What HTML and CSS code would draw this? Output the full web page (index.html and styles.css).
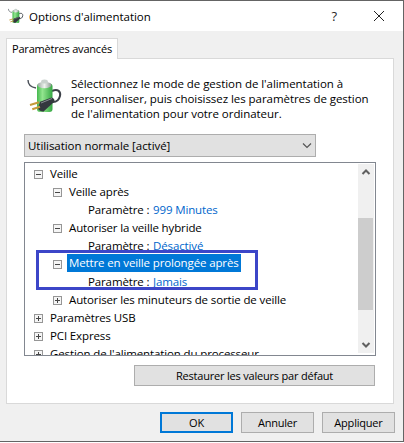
FILE: index.html
```html
<!doctype html>
<html lang="fr">
<head>
<meta charset="utf-8">
<title>Options d'alimentation</title>
<link rel="stylesheet" href="styles.css">
</head>
<body>
<svg class="defs" width="0" height="0">
	<defs>
		<linearGradient id="cell" x1="0" y1="0" x2="1" y2="0">
			<stop offset="0" stop-color="#45b84e"/>
			<stop offset="0.35" stop-color="#93e58f"/>
			<stop offset="1" stop-color="#35a743"/>
		</linearGradient>
		<linearGradient id="cap" x1="0" y1="0" x2="1" y2="0">
			<stop offset="0" stop-color="#9aa6a0"/>
			<stop offset="0.5" stop-color="#eef3ee"/>
			<stop offset="1" stop-color="#8b9690"/>
		</linearGradient>
		<symbol id="powerIcon" viewBox="0 0 36 36">
			<path d="M1 2 C1 6 3 9 9 10" fill="none" stroke="#4a5058" stroke-width="1.4"/>
			<path d="M25 13 C31 10 34 14 33 18 C32 22 30 24 26 24" fill="none" stroke="#3c4148" stroke-width="2"/>
			<rect x="10" y="5.5" width="15.5" height="28.5" rx="3" fill="url(#cell)"/>
			<ellipse cx="17.5" cy="7" rx="7" ry="3.2" fill="url(#cap)"/>
			<ellipse cx="17.5" cy="3.6" rx="3.4" ry="2" fill="#c9d2cd"/>
			<path d="M11 30 L13 23.7 L24.7 19.5 C27 20 28 22 27.3 23.7 L16.3 33.7 C13 33.5 11.5 32 11 30 Z" fill="#33383e"/>
			<path d="M14 25 L25 20.5" stroke="#878d92" stroke-width="1" fill="none"/>
			<path d="M3 27 L12 24.3 M5.3 31.3 L13 28.7" stroke="#c69a3a" stroke-width="2" fill="none"/>
		</symbol>
	</defs>
</svg>

<div id="window">
	<div class="titleBar">
		<svg class="titleIcon"><use href="#powerIcon"/></svg>
		<div class="titleText">Options d'alimentation</div>
		<div class="helpButton">?</div>
		<svg class="closeButton" width="12" height="12" viewBox="0 0 12 12">
			<path d="M1 1 L11 11 M11 1 L1 11" stroke="#222" stroke-width="1" fill="none"/>
		</svg>
	</div>

	<div class="dialogBody">
		<div class="tabStrip"><div class="tab">Paramètres avancés</div></div>
		<div class="tabPanel">
			<div class="intro">
				<svg class="introIcon"><use href="#powerIcon"/></svg>
				<div class="introText">Sélectionnez le mode de gestion de l'alimentation à personnaliser, puis choisissez les paramètres de gestion de l'alimentation pour votre ordinateur.</div>
			</div>

			<div class="combo">
				<span>Utilisation normale [activé]</span>
				<svg width="12" height="7" viewBox="0 0 12 7">
					<path d="M2 1.5 L6 5.5 L10 1.5" stroke="#555" stroke-width="1.2" fill="none"/>
				</svg>
			</div>

			<div class="tree">
				<div class="treeRows">
					<div class="row levelOne"><i class="expander minus"></i><span>Veille</span></div>
					<div class="row levelTwo"><i class="expander minus"></i><span>Veille après</span></div>
					<div class="row levelThree"><span class="paramLabel">Paramètre :</span><span class="paramValue">999 Minutes</span></div>
					<div class="row levelTwo"><i class="expander minus"></i><span>Autoriser la veille hybride</span></div>
					<div class="row levelThree"><span class="paramLabel">Paramètre :</span><span class="paramValue">Désactivé</span></div>
					<div class="row levelTwo"><i class="expander minus"></i><span class="selected">Mettre en veille prolongée après</span></div>
					<div class="row levelThree"><span class="paramLabel">Paramètre :</span><span class="paramValue">Jamais</span></div>
					<div class="row levelTwo"><i class="expander plus"></i><span>Autoriser les minuteurs de sortie de veille</span></div>
					<div class="row levelOne"><i class="expander plus"></i><span>Paramètres USB</span></div>
					<div class="row levelOne"><i class="expander plus"></i><span>PCI Express</span></div>
					<div class="row levelOne"><i class="expander plus"></i><span>Gestion de l'alimentation du processeur</span></div>
				</div>
				<div class="scrollBar">
					<svg class="scrollArrow" width="16" height="16" viewBox="0 0 16 16">
						<path d="M4.5 10 L8 6.5 L11.5 10" stroke="#606060" stroke-width="2" fill="none"/>
					</svg>
					<div class="scrollTrack"><div class="scrollThumb"></div></div>
					<svg class="scrollArrow" width="16" height="16" viewBox="0 0 16 16">
						<path d="M4.5 6 L8 9.5 L11.5 6" stroke="#606060" stroke-width="2" fill="none"/>
					</svg>
				</div>
				<div class="callout"></div>
			</div>

			<div class="restoreRow"><div class="button restoreButton">Restaurer les valeurs par défaut</div></div>
		</div>

		<div class="dialogButtons">
			<div class="button defaultButton">OK</div>
			<div class="button">Annuler</div>
			<div class="button">Appliquer</div>
		</div>
	</div>
</div>
</body>
</html>
```
FILE: styles.css
```css
* {
	box-sizing: border-box;
}

html, body {
	margin: 0px;
	padding: 0px;
	background-color: rgb(255,255,255);
}

body {
	width: 404px;
	height: 443px;
	overflow: hidden;
	font-family: "Open Sans", "Noto Sans", sans-serif;
	font-size: 11.5px;
	letter-spacing: -0.05px;
	color: rgb(0,0,0);
}

.defs {
	position: absolute;
}

#window {
	display: flex;
	flex-direction: column;
	width: 404px;
	height: 442px;
	border-top: 1px solid rgb(100,100,100);
	border-right: 1px solid rgb(100,100,100);
	border-bottom: 1px solid rgb(100,100,100);
}

.titleBar {
	display: flex;
	align-items: center;
	flex: 0 0 30px;
	padding-left: 8px;
	background-color: rgb(255,255,255);
}

.titleIcon {
	width: 16px;
	height: 16px;
	margin-right: 5px;
}

.titleText {
	flex: 1;
}

.helpButton {
	margin-right: 36px;
	font-size: 13px;
	color: rgb(40,40,40);
}

.closeButton {
	margin-right: 18px;
}

.dialogBody {
	flex: 1;
	display: flex;
	flex-direction: column;
	padding: 7px 8px 0px 6px;
	background-color: rgb(240,240,240);
}

.tabStrip {
	display: flex;
	height: 21px;
	margin-bottom: -1px;
}

.tab {
	position: relative;
	z-index: 1;
	width: 112px;
	height: 21px;
	padding-top: 2px;
	font-size: 11px;
	letter-spacing: -0.2px;
	text-align: center;
	white-space: nowrap;
	background-color: rgb(255,255,255);
	border: 1px solid rgb(217,217,217);
	border-bottom: none;
}

.tabPanel {
	width: 388px;
	height: 346px;
	padding: 12px 17px 0px 17px;
	background-color: rgb(255,255,255);
	border: 1px solid rgb(217,217,217);
}

.intro {
	display: flex;
	height: 63px;
}

.introIcon {
	flex: none;
	width: 36px;
	height: 36px;
	margin: 7px 8px 0px 3px;
}

.introText {
	padding-top: 5px;
	line-height: 15px;
	width: 305px;
}

.combo {
	display: flex;
	align-items: center;
	justify-content: space-between;
	width: 292px;
	height: 23px;
	padding: 0px 2px 0px 3px;
	background-color: rgb(225,225,225);
	border: 1px solid rgb(173,173,173);
}

.tree {
	position: relative;
	display: flex;
	width: 352px;
	height: 194px;
	margin-top: 5px;
	letter-spacing: -0.13px;
	background-color: rgb(255,255,255);
	border: 1px solid rgb(130,135,144);
	overflow: hidden;
}

.treeRows {
	flex: 1;
	padding-top: 1px;
	overflow: hidden;
}

.row {
	display: flex;
	align-items: center;
	height: 18px;
	white-space: nowrap;
}

.levelOne {
	padding-left: 9px;
}

.levelTwo {
	padding-left: 28px;
}

.levelThree {
	padding-left: 63px;
}

.expander {
	position: relative;
	flex: none;
	width: 9px;
	height: 9px;
	margin-top: 2px;
	margin-right: 7px;
	border: 1px solid rgb(150,150,150);
	background-color: rgb(245,245,245);
}

.expander::before,
.plus::after {
	content: "";
	position: absolute;
	background-color: rgb(70,70,70);
}

.expander::before {
	left: 1px;
	top: 3px;
	width: 5px;
	height: 1px;
}

.plus::after {
	left: 3px;
	top: 1px;
	width: 1px;
	height: 5px;
}

.selected {
	display: block;
	margin-left: -2px;
	padding: 0px 2px 0px 2px;
	line-height: 18px;
	color: rgb(255,255,255);
	background-color: rgb(0,120,215);
}

.paramLabel {
	width: 65px;
}

.paramValue {
	color: rgb(0,102,204);
}

.scrollBar {
	flex: none;
	display: flex;
	flex-direction: column;
	width: 16px;
	margin: 1px 1px 2px 0px;
	background-color: rgb(240,240,240);
}

.scrollArrow {
	flex: none;
}

.scrollTrack {
	flex: 1;
	padding-top: 38px;
}

.scrollThumb {
	width: 15px;
	height: 92px;
	background-color: rgb(205,205,205);
}

.callout {
	position: absolute;
	left: 11px;
	top: 87px;
	width: 222px;
	height: 40px;
	border: 3px solid rgb(60,70,200);
}

.restoreRow {
	display: flex;
	justify-content: flex-end;
	margin-top: 9px;
	margin-right: 1px;
}

.button {
	display: flex;
	align-items: center;
	justify-content: center;
	width: 73px;
	height: 21px;
	font-size: 11px;
	letter-spacing: -0.2px;
	background-color: rgb(225,225,225);
	border: 1px solid rgb(173,173,173);
}

.restoreButton {
	width: 241px;
}

.defaultButton {
	border: 2px solid rgb(0,120,215);
}

.dialogButtons {
	display: flex;
	justify-content: flex-end;
	gap: 8px;
	margin-top: 8px;
}
```
